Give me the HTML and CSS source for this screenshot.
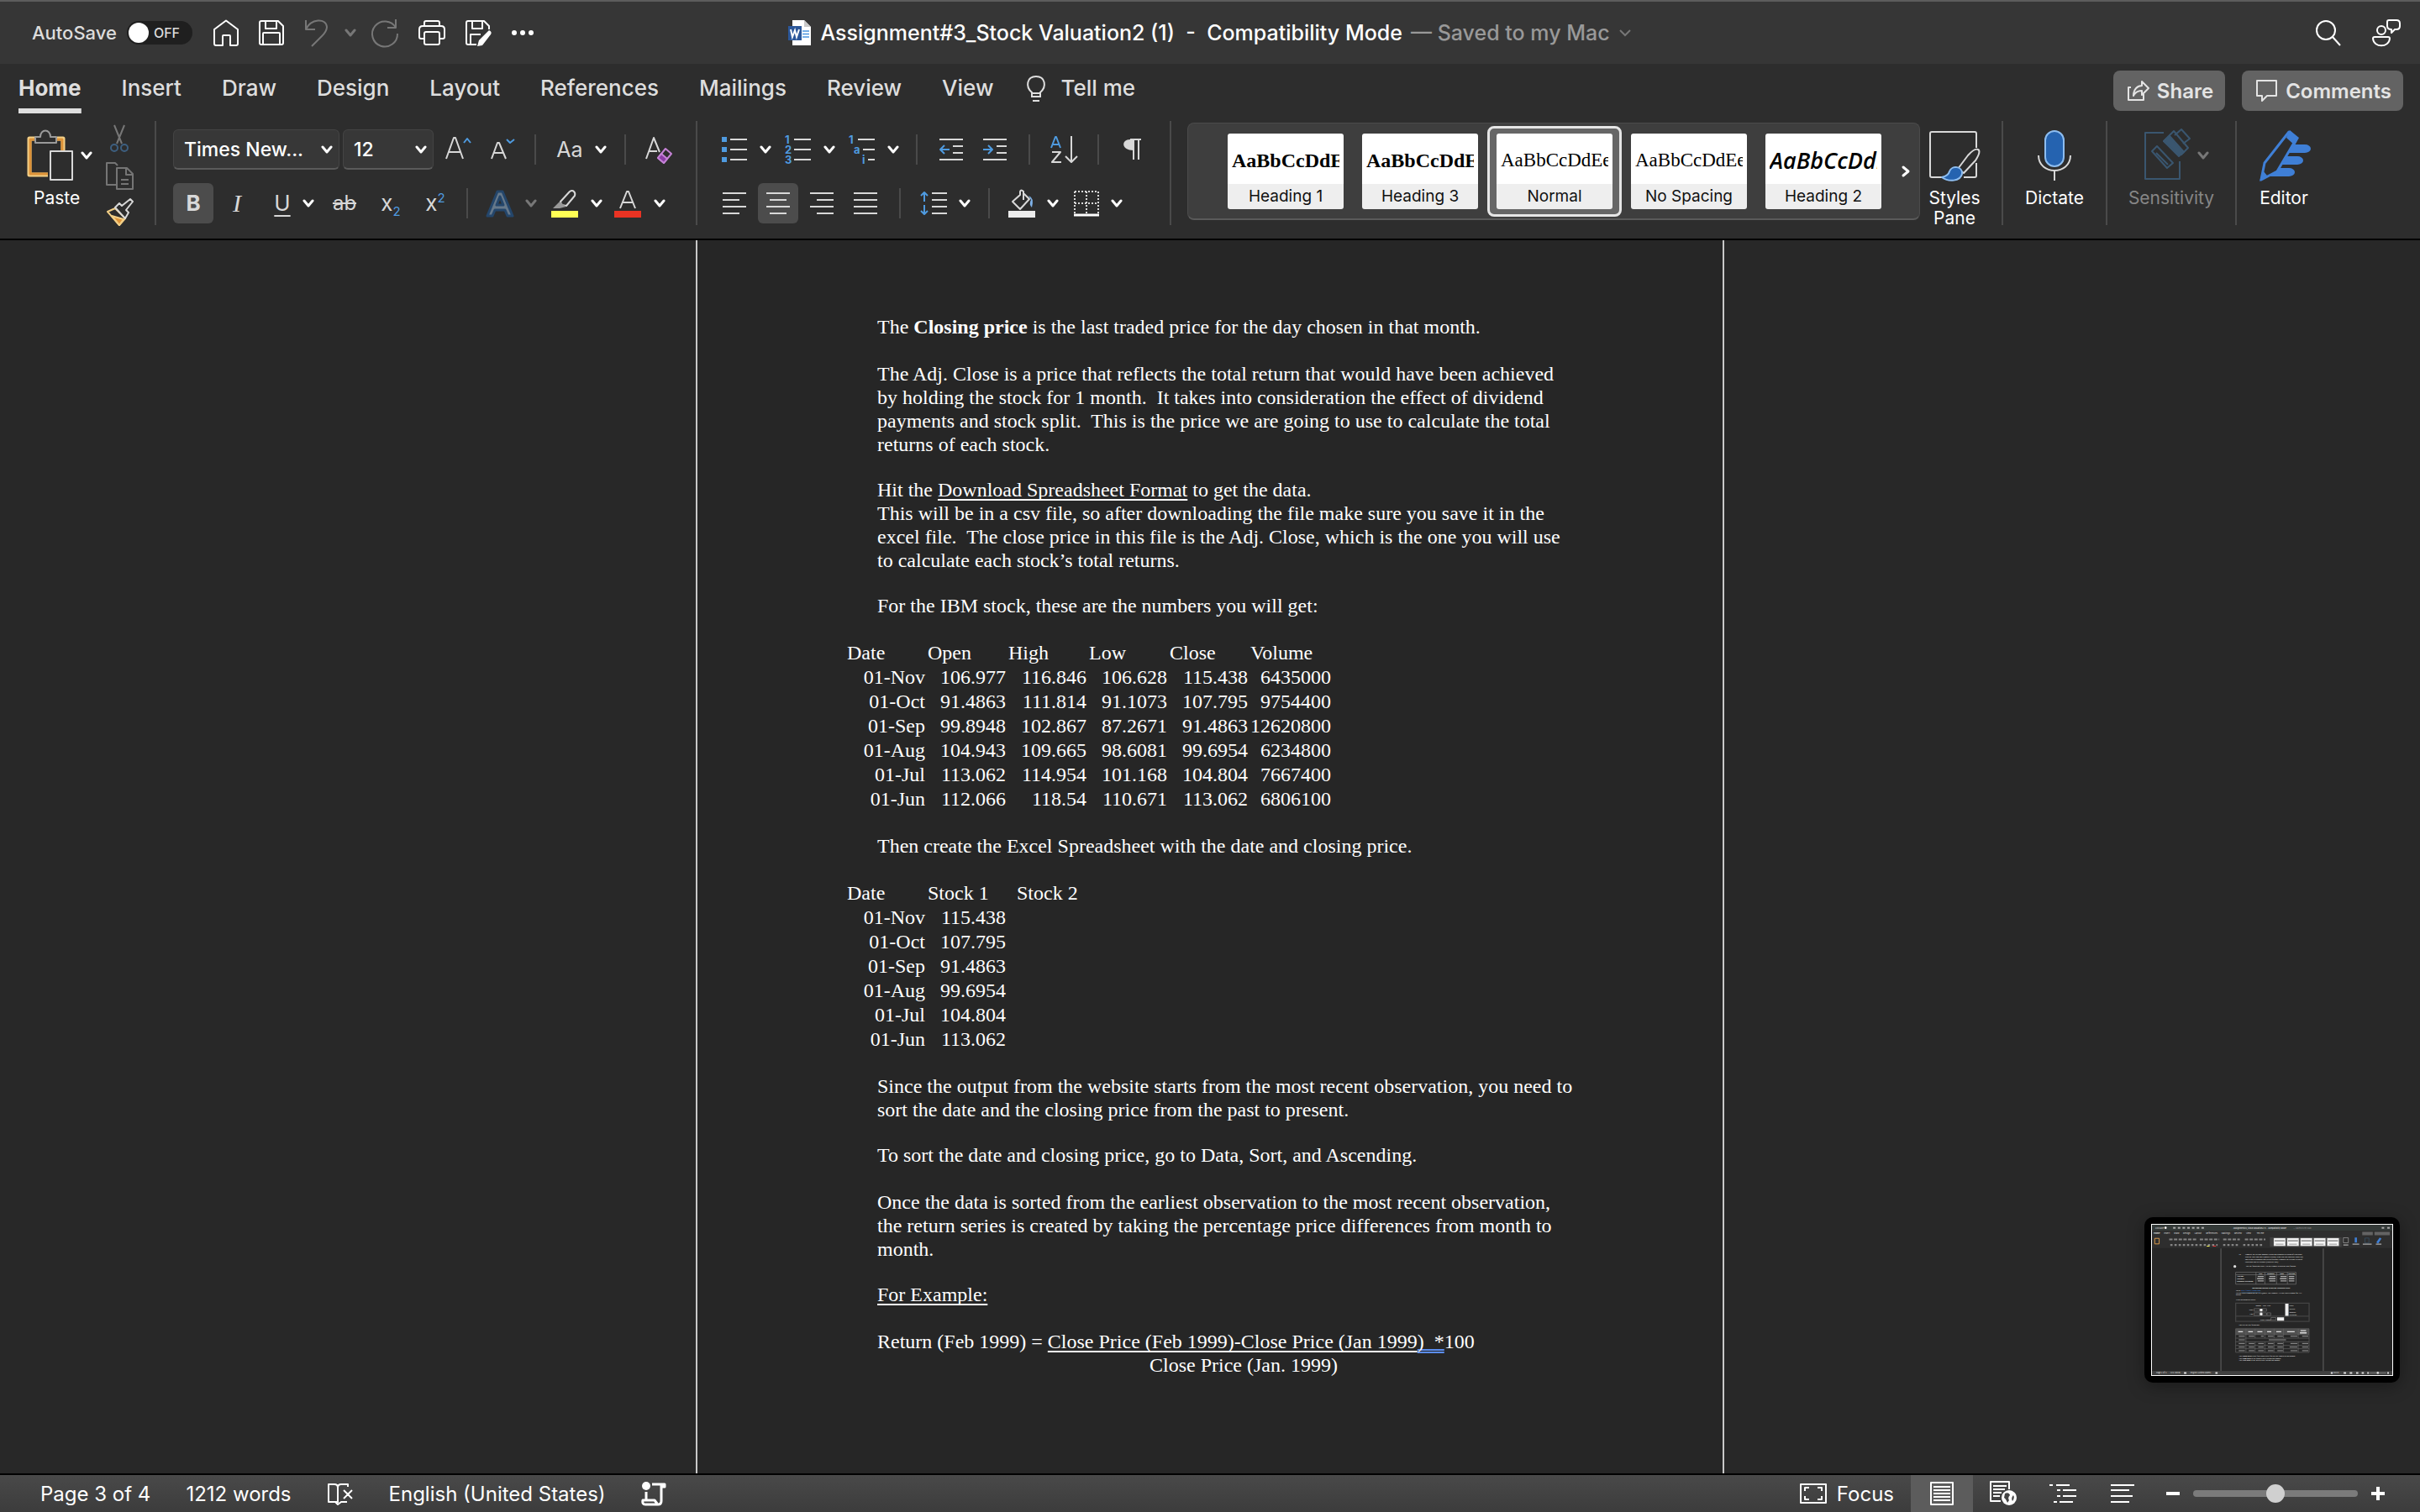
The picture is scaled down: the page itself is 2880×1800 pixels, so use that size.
FILE: index.html
```html
<!DOCTYPE html>
<html lang="en">
<head>
<meta charset="utf-8">
<title>Assignment#3_Stock Valuation2 (1)</title>
<link rel="stylesheet" href="styles.css">
</head>
<body>
<svg class="defs" aria-hidden="true">
  <symbol id="chev" viewBox="0 0 14 10"><path d="M2 2l5 6 5-6" fill="none" stroke="currentColor" stroke-width="3" stroke-linecap="round" stroke-linejoin="round"/></symbol>
</svg>

<header class="titlebar">
  <div class="quick">
    <label class="autosave">AutoSave <span class="toggle"><input type="checkbox"><i></i><b>OFF</b></span></label>
    <button aria-label="Home"><svg width="32" height="32" viewBox="0 0 32 32"><path d="M2 12L16 1.500l14 10.500v17q0 2-2 2h-7v-11q0-1-1-1h-7q-1 0-1 1v11H4q-2 0-2-2z"/></svg></button>
    <button aria-label="Save"><svg width="32" height="32" viewBox="0 0 32 32"><path d="M4 2h20l6 6v20q0 2-2 2H4q-2 0-2-2V4q0-2 2-2zM9 2v9h13V2M6 30V17q0-1 1-1h18q1 0 1 1v13"/></svg></button>
    <button class="dim" aria-label="Undo"><svg width="32" height="34" viewBox="0 0 32 34"><path d="M3 2v11h11M3 13C9 0 27-1 28 10c0 5-3 8-6 11L10 33"/></svg></button>
    <button class="dim mini" aria-label="Undo options"><svg width="14" height="10"><use href="#chev"/></svg></button>
    <button class="dim" aria-label="Redo"><svg width="34" height="34" viewBox="0 0 34 34"><path d="M30 1v10H20M30 11A15 15 0 1 0 32 18"/></svg></button>
    <button aria-label="Print"><svg width="34" height="32" viewBox="0 0 34 32"><path d="M8 8V4q0-2 2-2h14q2 0 2 2v4M8 23H4q-2 0-2-2V12q0-4 4-4h22q4 0 4 4v9q0 2-2 2h-4M8 17q0-2 2-2h14q2 0 2 2v11q0 2-2 2H10q-2 0-2-2z"/></svg></button>
    <button aria-label="Save as"><svg width="34" height="32" viewBox="0 0 34 32"><path d="M14 30H4q-2 0-2-2V4q0-2 2-2h19l6 6v4M9 2v9h12V2M7 30V18h12"/><path d="M29 13q4 2 2 5L21 31l-6 1 2-7z" fill="currentColor" stroke="none"/></svg></button>
    <button aria-label="More"><svg width="32" height="8" viewBox="0 0 32 8"><g fill="currentColor" stroke="none"><circle cx="3" cy="4" r="3"/><circle cx="13" cy="4" r="3"/><circle cx="23" cy="4" r="3"/></g></svg></button>
  </div>
  <h1 class="doc-title">
    <svg width="28" height="32" viewBox="0 0 28 32"><path d="M5 1h14l8 8v22H5z" fill="#fff"/><path d="M19 1v8h8z" fill="#c9c9c9"/><path d="M17 14h8M17 17.500h8M17 21h8" stroke="#4a94e0" stroke-width="1.500"/><path d="M0 8h16v17H0z" fill="#2b579a"/><path d="M3 12l2 9 3-8 2 8 3-9" fill="none" stroke="#fff" stroke-width="2"/></svg>
    <span>Assignment#3_Stock Valuation2 (1)&nbsp; -&nbsp; Compatibility Mode</span><span class="saved">— Saved to my Mac</span>
    <svg class="saved" width="16" height="10" viewBox="0 0 16 10"><path d="M2 2l6 6 6-6" fill="none" stroke="#777" stroke-width="2"/></svg>
  </h1>
  <div class="title-right">
    <button aria-label="Search"><svg width="32" height="32" viewBox="0 0 32 32"><circle cx="13" cy="13" r="11"/><path d="M21 21l9 10"/></svg></button>
    <button aria-label="Presence"><svg width="34" height="34" viewBox="0 0 34 34"><circle cx="11" cy="14" r="5"/><path d="M3 22h16q2 0 2 2c-1 11-19 11-20 0q0-2 2-2zM20 2h9q4 0 4 4v3q0 4-4 4h-2l-4 4v-4q-5 0-5-4V4q0-2 2-2z"/></svg></button>
  </div>
</header>

<nav class="tabs">
  <a class="on" href="#">Home</a><a href="#">Insert</a><a href="#">Draw</a><a href="#">Design</a><a href="#">Layout</a><a href="#">References</a><a href="#">Mailings</a><a href="#">Review</a><a href="#">View</a>
  <a class="tell" href="#"><svg width="26" height="34" viewBox="0 0 26 34"><path d="M8 26v-5C0 14 2 2 13 2s13 12 5 19v5zM8 22h10M9 31h8" fill="none" stroke="currentColor" stroke-width="2"/></svg>Tell me</a>
  <div class="tab-actions">
    <button><svg width="28" height="28" viewBox="0 0 28 28"><path d="M5 10H2v15h18v-7M8 20c0-8 5-12 10-12V3l8 8-8 8v-5c-5 0-8 2-10 6z"/></svg>Share</button>
    <button><svg width="28" height="28" viewBox="0 0 28 28"><path d="M2 2h23v18H14l-6 6v-6H2z"/></svg>Comments</button>
  </div>
</nav>

<section class="ribbon" aria-label="Home ribbon">
  <div class="group clip">
    <button class="big paste"><span class="split"><svg width="56" height="62" viewBox="0 0 56 62"><path d="M10 11H3v43h22M36 11h7v14" fill="none" stroke="#f3cf86" stroke-width="5"/><path d="M10 12H4v41h21M36 12h6v13" fill="none" stroke="#dd9339" stroke-width="3"/><path d="M10 16V9h6c0-10 12-10 12 0h7v7z" fill="#2d2d2d" stroke="#9a9a9a" stroke-width="2"/><path d="M28 26h26v34H28z" fill="#2d2d2d" stroke="#d8d8d8" stroke-width="2"/></svg><svg width="14" height="10"><use href="#chev"/></svg></span>Paste</button>
    <div class="clip-tools">
      <button aria-label="Cut"><svg width="34" height="34" viewBox="0 0 34 34"><path d="M10 1l9 22M22 1l-9 22" stroke="#777"/><circle cx="10" cy="28" r="4" stroke="#3d5f80"/><circle cx="22" cy="28" r="4" stroke="#3d5f80"/></svg></button>
      <button aria-label="Copy"><svg width="34" height="34" viewBox="0 0 34 34"><path d="M12 28H1V2h10l3 3M13 8h12l7 7v18H13zM24 8v8h8M18 22h9M18 27h9" stroke="#757575"/></svg></button>
      <button aria-label="Format painter"><svg width="34" height="34" viewBox="0 0 34 34"><path d="M2 16l9-4 12 12-7 8z" stroke="#f3cf86"/><path d="M7 21l14 4-5 7z" fill="#dd9339" stroke="#f3cf86"/><path d="M11 11l12 13 4-7-3-3 8-10-3-3-10 8-3-3z" fill="#2d2d2d" stroke="#d8d8d8"/></svg></button>
    </div>
  </div>

  <div class="group font-group">
    <div class="row font-1">
      <span class="picker"><select aria-label="Font"><option>Times New...</option></select><svg width="14" height="10"><use href="#chev"/></svg></span>
      <span class="picker"><select aria-label="Font size"><option>12</option></select><svg width="14" height="10"><use href="#chev"/></svg></span>
      <button aria-label="Grow font"><svg width="32" height="32" viewBox="0 0 32 32"><path d="M2 27L11 2h2l9 25M5 19h14"/><path d="M23 8l4-5 4 5" stroke="#4f9be0"/></svg></button>
      <button aria-label="Shrink font"><svg width="32" height="32" viewBox="0 0 32 32"><path d="M3 27l7-19h2l8 19M6 20h11"/><path d="M21 4l4 4 5-4" stroke="#4f9be0"/></svg></button>
      <hr>
      <button class="split"><span class="glyph">Aa</span><svg width="14" height="10"><use href="#chev"/></svg></button>
      <hr>
      <button aria-label="Clear formatting"><svg width="34" height="34" viewBox="0 0 34 34"><path d="M2 28L11 3l7 17M6 19h9"/><path d="M25 16l7 6-9 11-7-6z" stroke="#c583d6"/><path d="M20 22l7 6-4 5-7-6z" fill="#8c3da6" stroke="#c583d6"/></svg></button>
    </div>
    <div class="row font-2">
      <button class="on" aria-label="Bold"><b class="letter">B</b></button>
      <button aria-label="Italic"><i class="letter serif">I</i></button>
      <button class="split"><span class="letter under">U</span><svg width="14" height="10"><use href="#chev"/></svg></button>
      <button><s class="letter small">ab</s></button>
      <button><span class="letter">x<sub>2</sub></span></button>
      <button><span class="letter">x<sup>2</sup></span></button>
      <hr>
      <button class="split dim" aria-label="Text effects"><svg width="32" height="32" viewBox="0 0 32 32"><path d="M1 31L13 2h6l12 29h-6l-3-7H10l-3 7zM12 18h8L16 8z" fill="#66788a" stroke="#24466b" stroke-width="3"/></svg><svg width="14" height="10"><use href="#chev"/></svg></button>
      <button class="split" aria-label="Highlight"><svg width="34" height="34" viewBox="0 0 34 34"><path d="M12 15L23 3q3-2 5 0t1 5L19 20l-6-1z"/><path d="M11 15l8 6-8 2H3z" fill="#999" stroke="none"/><path d="M1 26h32v8H1z" fill="#ffff55" stroke="none"/></svg><svg width="14" height="10"><use href="#chev"/></svg></button>
      <button class="split" aria-label="Font colour"><svg width="34" height="34" viewBox="0 0 34 34"><path d="M8 23L16 3h2l8 20M11 16h12"/><path d="M1 26h32v8H1z" fill="#ea3323" stroke="none"/></svg><svg width="14" height="10"><use href="#chev"/></svg></button>
    </div>
  </div>

  <div class="group para-group">
    <div class="row para-1">
      <button class="split" aria-label="Bullets"><svg width="32" height="32" viewBox="0 0 32 32"><path d="M1 1h6v6H1zM1 13h6v6H1zM1 25h6v6H1z" fill="#4f9be0" stroke="none"/><path d="M11 4h20M11 16h20M11 28h20"/></svg><svg width="14" height="10"><use href="#chev"/></svg></button>
      <button class="split" aria-label="Numbering"><svg width="32" height="34" viewBox="0 0 32 34"><g class="num"><text x="0" y="10">1</text><text x="0" y="22">2</text><text x="0" y="34">3</text></g><path d="M11 5h20M11 17h20M11 29h20"/></svg><svg width="14" height="10"><use href="#chev"/></svg></button>
      <button class="split" aria-label="Multilevel list"><svg width="32" height="34" viewBox="0 0 32 34"><g class="num"><text x="0" y="10">1</text><text x="6" y="22">a</text><text x="16" y="34">i</text></g><path d="M11 5h20M17 17h14M23 29h8"/></svg><svg width="14" height="10"><use href="#chev"/></svg></button>
      <hr>
      <button aria-label="Decrease indent"><svg width="30" height="30" viewBox="0 0 30 30"><path d="M1 3h28M17 11h12M17 19h12M1 27h28"/><path d="M13 15H2M7 10l-5 5 5 5" stroke="#4f9be0"/></svg></button>
      <button aria-label="Increase indent"><svg width="30" height="30" viewBox="0 0 30 30"><path d="M1 3h28M17 11h12M17 19h12M1 27h28"/><path d="M1 15h11M7 10l5 5-5 5" stroke="#4f9be0"/></svg></button>
      <hr>
      <button aria-label="Sort"><svg width="34" height="34" viewBox="0 0 34 34"><path d="M2 15L7 2h1l5 13M4 11h8" stroke="#4f9be0"/><path d="M3 20h10L3 32h11M26 1v30M19 25l7 7 7-7"/></svg></button>
      <hr>
      <button aria-label="Show marks"><svg width="24" height="28" viewBox="0 0 24 28"><path d="M9 2h13M13 2v24M19 2v24"/><path d="M13 2v13C-2 15-2 2 9 2z" fill="currentColor" stroke="none"/></svg></button>
    </div>
    <div class="row para-2">
      <button aria-label="Align left"><svg width="28" height="28" viewBox="0 0 28 28"><path d="M0 2h28M0 10h20M0 18h28M0 26h20"/></svg></button>
      <button class="on" aria-label="Center"><svg width="28" height="28" viewBox="0 0 28 28"><path d="M0 2h28M4 10h20M0 18h28M4 26h20"/></svg></button>
      <button aria-label="Align right"><svg width="28" height="28" viewBox="0 0 28 28"><path d="M0 2h28M8 10h20M0 18h28M8 26h20"/></svg></button>
      <button aria-label="Justify"><svg width="28" height="28" viewBox="0 0 28 28"><path d="M0 2h28M0 10h28M0 18h28M0 26h28"/></svg></button>
      <hr>
      <button class="split" aria-label="Line spacing"><svg width="32" height="32" viewBox="0 0 32 32"><path d="M14 4h18M14 12h18M14 20h18M14 28h18"/><path d="M5 14V3M1 7l4-4 4 4M5 18v11M1 25l4 4 4-4" stroke="#4f9be0"/></svg><svg width="14" height="10"><use href="#chev"/></svg></button>
      <hr>
      <button class="split" aria-label="Shading"><svg width="32" height="34" viewBox="0 0 32 34"><path d="M14 7L5 15l9 9 11-12-7-7V3q-3-3-4 0zM18 5v8"/><path d="M24 8q7 2 4 14q-4-4-1-9z" fill="#7fb2e8" stroke="none"/><path d="M0 26h32v8H0z" fill="#ececec" stroke="none"/></svg><svg width="14" height="10"><use href="#chev"/></svg></button>
      <button class="split" aria-label="Borders"><svg width="30" height="32" viewBox="0 0 30 32"><path d="M1 2h28M1 16h28M1 2v28M15 2v26M29 2v28" stroke-dasharray="2 2"/><path d="M0 30h30" stroke="#fff" stroke-width="3"/></svg><svg width="14" height="10"><use href="#chev"/></svg></button>
    </div>
  </div>

  <div class="group styles-group">
    <div class="gallery">
      <button><b>AaBbCcDdEe</b><span>Heading 1</span></button>
      <button><b>AaBbCcDdEe</b><span>Heading 3</span></button>
      <button class="picked"><em>AaBbCcDdEe</em><span>Normal</span></button>
      <button><em>AaBbCcDdEe</em><span>No Spacing</span></button>
      <button><i>AaBbCcDdEe</i><span>Heading 2</span></button>
      <button class="more" aria-label="More styles"><svg width="10" height="14" viewBox="0 0 10 14"><path d="M2 2l6 5-6 5" fill="none" stroke="#fff" stroke-width="3" stroke-linecap="round"/></svg></button>
    </div>
    <button class="big"><svg width="62" height="62" viewBox="0 0 62 62"><path d="M16 57H4q-2 0-2-2V5q0-2 2-2h51q2 0 2 2v17M57 40v15q0 2-2 2H42" stroke="#d8d8d8"/><path d="M59 24q4 2-3 13L42 52l-7-5 12-16q8-9 12-7z" fill="#2d2d2d" stroke="#d8d8d8"/><path d="M16 57q8-2 9-7c3-8 16-6 15 3-2 9-16 10-24 4z" fill="#2563b0" stroke="#8dbdf0"/></svg>Styles<br>Pane</button>
  </div>

  <div class="group dictate"><button class="big"><svg width="42" height="62" viewBox="0 0 42 62"><rect x="10" y="2" width="22" height="42" rx="11" fill="#2563b0" stroke="#8dbdf0"/><path d="M2 31c0 24 38 24 38 0M21 50v11" stroke="#d8d8d8"/></svg>Dictate</button></div>
  <div class="group sensitivity"><button class="big"><span class="split"><svg width="56" height="62" viewBox="0 0 56 62"><g stroke="#3a566f"><path d="M24 4H2v55h41V38"/><path d="M10 26l6-6 19 20-7 6zM15 28l14 14" /><path d="M24 14l12-12 17 20-8 8-7-5z"/><path d="M24 14l7-6 17 19-6 5z" fill="#3a566f"/><path d="M37 7l8-7 10 11-8 6"/></g></svg><svg width="14" height="10"><use href="#chev"/></svg></span>Sensitivity</button></div>
  <div class="group editor"><button class="big"><svg width="62" height="62" viewBox="0 0 62 62"><path d="M38 18h18a7 5 0 0 1 0 10H34zM33 32h14a7 5 0 0 1 0 10H26zM24 46h13a7 5 0 0 1 0 10H14z" fill="#3f7fd6" stroke="none"/><path d="M37 3l9 8-23 39-19 10 4-20z" fill="#2d2d2d" stroke="#3f7fd6" stroke-width="3"/><path d="M38 1l11 9-5 9-10-9zM2 62l4-13 5 6z" fill="#3f7fd6" stroke="none"/></svg>Editor</button></div>
</section>

<main class="workspace">
  <article class="page">
    <p>The <b>Closing price</b> is the last traded price for the day chosen in that month.</p>
    <p class="long">The Adj. Close is a price that reflects the total return that would have been achieved by holding the stock for 1 month.&nbsp; It takes into consideration the effect of dividend payments and stock split.&nbsp; This is the price we are going to use to calculate the total returns of each stock.</p>
    <p class="long">Hit the <u>Download Spreadsheet Format</u> to get the data.<br>This will be in a csv file, so after downloading the file make sure you save it in the excel file.&nbsp; The close price in this file is the Adj. Close, which is the one you will use to calculate each stock’s total returns.</p>
    <p>For the IBM stock, these are the numbers you will get:</p>
    <table>
      <tr><th>Date</th><th>Open</th><th>High</th><th>Low</th><th>Close</th><th>Volume</th></tr>
      <tr><td>01-Nov</td><td>106.977</td><td>116.846</td><td>106.628</td><td>115.438</td><td>6435000</td></tr>
      <tr><td>01-Oct</td><td>91.4863</td><td>111.814</td><td>91.1073</td><td>107.795</td><td>9754400</td></tr>
      <tr><td>01-Sep</td><td>99.8948</td><td>102.867</td><td>87.2671</td><td>91.4863</td><td>12620800</td></tr>
      <tr><td>01-Aug</td><td>104.943</td><td>109.665</td><td>98.6081</td><td>99.6954</td><td>6234800</td></tr>
      <tr><td>01-Jul</td><td>113.062</td><td>114.954</td><td>101.168</td><td>104.804</td><td>7667400</td></tr>
      <tr><td>01-Jun</td><td>112.066</td><td>118.54</td><td>110.671</td><td>113.062</td><td>6806100</td></tr>
    </table>
    <p>Then create the Excel Spreadsheet with the date and closing price.</p>
    <table class="stocks">
      <tr><th>Date</th><th>Stock 1</th><th>Stock 2</th></tr>
      <tr><td>01-Nov</td><td>115.438</td><td></td></tr>
      <tr><td>01-Oct</td><td>107.795</td><td></td></tr>
      <tr><td>01-Sep</td><td>91.4863</td><td></td></tr>
      <tr><td>01-Aug</td><td>99.6954</td><td></td></tr>
      <tr><td>01-Jul</td><td>104.804</td><td></td></tr>
      <tr><td>01-Jun</td><td>113.062</td><td></td></tr>
    </table>
    <p class="long">Since the output from the website starts from the most recent observation, you need to sort the date and the closing price from the past to present.</p>
    <p>To sort the date and closing price, go to Data, Sort, and Ascending.</p>
    <p class="long">Once the data is sorted from the earliest observation to the most recent observation, the return series is created by taking the percentage price differences from month to month.</p>
    <p><u>For Example:</u></p>
    <p class="formula">Return (Feb 1999) = <u>Close Price (Feb 1999)-Close Price (Jan 1999</u><span class="flag">)&nbsp; *</span>100<span class="divisor">Close Price (Jan. 1999)</span></p>
  </article>

  <aside class="preview" aria-label="Captured window">
    <svg viewBox="90 84 864 540">
      <rect x="90" y="84" width="864" height="540" fill="#262626"/>
      <rect x="90" y="84" width="864" height="22" fill="#343a38"/><rect x="90" y="106" width="864" height="62" fill="#2e2e2e"/>
      <g fill="#ddd" font-size="8"><text x="101" y="98" font-size="7">AutoSave</text><text x="382" y="98" font-size="7" font-weight="600">Assignment#3_Stock Valuation2 (1) - Compatibility Mode</text><text x="598" y="98" font-size="7" fill="#999">— Saved to my Mac</text>
      <text x="96" y="118" font-weight="700">Home</text><text x="133" y="118">Insert</text><text x="169" y="118">Draw</text><text x="202" y="118">Design</text><text x="243" y="118">Layout</text><text x="284" y="118">References</text><text x="340" y="118">Mailings</text><text x="386" y="118">Review</text><text x="428" y="118">View</text><text x="466" y="118">Tell me</text></g>
      <circle cx="139" cy="95" r="4" fill="#fff"/><path d="M166 95h116M916 95h10M936 95h10" stroke="#aaa" stroke-width="6" stroke-dasharray="9 8"/>
      <path d="M846 110h38v12h-38zM890 110h55v12h-55z" fill="#636363"/>
      <path d="M152 137h100M262 137h70M346 137h60M424 137h74" stroke="#858585" stroke-width="6" stroke-dasharray="12 5"/>
      <path d="M156 157h170M346 157h60M418 157h74" stroke="#858585" stroke-width="7" stroke-dasharray="8 7"/>
      <path d="M100 133h16v20h-16z" fill="none" stroke="#d99a4c" stroke-width="3"/><path d="M287 161h10" stroke="#ff5" stroke-width="3"/><path d="M309 161h11" stroke="#e33" stroke-width="3"/>
      <path d="M514 129h258v34H514z" fill="#404040"/>
      <path d="M528 132h42v28h-42zM576 132h42v28h-42zM624 132h42v28h-42zM672 132h42v28h-42zM720 132h42v28h-42z" fill="#f4f4f4" stroke="#999"/>
      <path d="M531 142h36M579 142h36M627 142h36M675 142h36M723 142h36" stroke="#777" stroke-width="4"/><path d="M535 154h28M583 154h28M631 154h28M679 154h28M727 154h28" stroke="#999" stroke-width="3"/>
      <path d="M778 131h18v18h-18z" fill="none" stroke="#aaa" stroke-width="2"/><path d="M823 130v18M900 150l12-18" stroke="#3f7fd6" stroke-width="8"/><path d="M856 132h14v18h-14z" fill="none" stroke="#3a566f" stroke-width="2"/>
      <path d="M778 157h18M811 154h24M848 154h32M895 154h20" stroke="#aaa" stroke-width="4"/>
      <path d="M338 169v441M706 169v441" stroke="#555" stroke-width="4"/>
      <g class="mini-doc"><text x="402" y="194">10.</text><text x="425" y="194">Compute the average monthly return and standard deviation of each stock</text><text x="425" y="203">with the S&amp;P 500 index (market return). What can you conclude about risk</text><text x="425" y="211">and return relationship and diversification? Compare the average return of</text><text x="425" y="219">each stock and its variance (volatility risk).</text><text x="428" y="236">Use the following Table 1 as an example to present your finding.</text></g>
      <circle cx="388" cy="234" r="5" fill="#ddd"/>
      <path d="M391 255h217v43H391zM391 264h217M464 255v43M496 255v43M538 255v43M577 255v43" fill="none" stroke="#777" stroke-width="2"/>
      <g class="mini-doc" font-weight="700"><text x="395" y="272">Average</text><text x="395" y="280">Variance</text><text x="395" y="288">Standard Deviation</text><text x="473" y="262">ATT</text><text x="504" y="262">Walmart</text><text x="550" y="262">IBM</text><text x="580" y="262">S&amp;P500</text><text x="450" y="314">Instructions on how to get the Historical Price</text></g>
      <path d="M470 270h22M512 270h22M552 270h22M582 270h20M468 278h24M510 278h24M550 278h24M582 278h20M470 286h22M512 286h22M552 286h22M582 286h20" stroke="#aaa" stroke-width="4"/>
      <g class="mini-doc"><text x="392" y="323">Go to</text><text x="411" y="323" class="mini-link">http://finance.yahoo.com</text><text x="392" y="331">Put the ticker symbol on the Get Quotes. For example: T is the ticker symbol for ATT</text><text x="392" y="339">stocks.</text><text x="392" y="355">Click on historical prices.</text><text x="463" y="377">Month</text><text x="489" y="377">Day</text><text x="503" y="377">Year</text><text x="440" y="393">Start</text><text x="442" y="408">End</text><text x="584" y="378">Daily</text><text x="584" y="389">Weekly</text><text x="584" y="400">Monthly</text><text x="584" y="411">Dividend</text><text x="478" y="428">Ticker Symbol</text><text x="402" y="447">You will get the following:</text></g>
      <path d="M391 366h264v66H391zM391 413h264" fill="none" stroke="#444" stroke-width="4"/>
      <path d="M457 386h20v9h-20zM488 386h14v9h-14zM457 401h20v9h-20zM488 401h14v9h-14zM504 401h13v9h-13zM518 418h18v9h-18z" fill="none" stroke="#777" stroke-width="2"/><path d="M478 386h9v10h-9zM478 400h9v10h-9zM569 368h12v44h-12zM540 417h25v12h-25z" fill="#eee"/>
      <path d="M391 458h264v21H391z" fill="#505050"/><path d="M391 458h264v85H391zM391 479h264M391 492h264M391 505h264M391 518h264M391 530h264M428 458v85M461 458v34M496 458v34M529 458v34M563 458v34M616 458v34M461 505v38M496 505v38M529 505v38M563 505v38M616 505v38" fill="none" stroke="#666" stroke-width="2"/>
      <path d="M400 469h17M436 469h17M469 469h18M504 469h15M537 469h18M576 469h27M624 465h20M622 473h24" stroke="#ddd" stroke-width="4"/>
      <path d="M402 485h22M402 498h22M402 511h22M402 524h22M402 537h22M438 485h20M438 511h20M438 524h20M438 537h20M482 485h10M472 511h20M472 524h20M472 537h20M507 485h20M507 511h20M507 524h20M507 537h20M541 485h20M541 511h20M541 524h20M541 537h20M588 485h25M588 511h25M585 524h28M588 537h25M630 485h22M630 511h22M630 524h22M630 537h22M510 498h62" stroke="#999" stroke-width="3"/>
      <g class="mini-doc"><text x="403" y="558">The <tspan font-weight="700">Open price</tspan> is the first traded price for the day chosen in that month.</text><text x="403" y="566">The <tspan font-weight="700">High price</tspan> is the highest price during that month.</text><text x="403" y="574">The <tspan font-weight="700">Low price</tspan> is the lowest price during that month.</text></g>
      <rect x="90" y="610" width="864" height="14" fill="#414141"/><g fill="#ddd" font-size="7"><text x="105" y="620">Page 2 of 4</text><text x="156" y="620">1212 words</text><text x="228" y="620">English (United States)</text><text x="742" y="620">Focus</text></g><path d="M205 617h9M318 617h8M733 617h7M779 617h9M801 617h9M824 617h8M844 617h8M864 617h6M936 617h6" stroke="#ddd" stroke-width="6"/><path d="M873 617h59" stroke="#999" stroke-width="2"/><circle cx="902" cy="617" r="4" fill="#ddd"/>
    </svg>
  </aside>
</main>

<footer class="status">
  <button>Page 3 of 4</button>
  <button>1212 words</button>
  <button aria-label="Proofing"><svg width="32" height="30" viewBox="0 0 32 30"><path d="M12 25H2V4h7q4 0 4 4 0-4 4-4h8v3M13 8v18M24 25h-7l-4 3-3-3M20 11l10 10M30 11L20 21"/></svg></button>
  <button>English (United States)</button>
  <button aria-label="Macros"><svg width="32" height="30" viewBox="0 0 32 30"><circle cx="6" cy="6" r="5" fill="currentColor" stroke="none"/><path d="M13 4h15v3h-4v17q0 4-4 4H5q-4 0-3-5h14l3 4M24 4v20M6 13v10" stroke-width="3"/></svg></button>
  <div class="views">
    <button class="focus"><svg width="32" height="26" viewBox="0 0 32 26"><path d="M1 2h30v22H1zM6 10V6h5M21 6h5v4M26 16v4h-5M11 20H6v-4"/></svg>Focus</button>
    <button class="on" aria-label="Print layout"><svg width="30" height="28" viewBox="0 0 30 28"><path d="M2 1h26v26H2zM5 6h20M5 10h20M5 14h20M5 18h20M5 22h20"/></svg></button>
    <button aria-label="Web layout"><svg width="34" height="30" viewBox="0 0 34 30"><path d="M14 24H2V1h22v9M5 6h16M5 10h14M5 14h10M5 18h8"/><circle cx="24" cy="20" r="9" fill="#fff" stroke="none"/><path d="M19 15q5-2 6 2-3 3-1 6l-2 3q-2-5-4-6zM29 17q2 3-1 7-2-4 1-7" fill="#444" stroke="none"/></svg></button>
    <button aria-label="Outline"><svg width="32" height="26" viewBox="0 0 32 26"><path d="M0 3h4M8 3h16M9 9h4M16 9h16M9 16h4M16 16h16M5 23h4M12 23h16"/></svg></button>
    <button aria-label="Draft"><svg width="30" height="26" viewBox="0 0 30 26"><path d="M1 3h28M1 9h22M1 16h26M1 23h22"/></svg></button>
  </div>
  <div class="zoom">
    <button aria-label="Zoom out"><svg width="16" height="16" viewBox="0 0 16 16"><path d="M0 8h16" stroke-width="4"/></svg></button>
    <input type="range" aria-label="Zoom" min="0" max="100" value="50">
    <button aria-label="Zoom in"><svg width="16" height="16" viewBox="0 0 16 16"><path d="M0 8h16M8 0v16" stroke-width="4"/></svg></button>
  </div>
</footer>
</body>
</html>
```
FILE: styles.css
```css
* { box-sizing: border-box; }
body {
  margin: 0;
  min-height: 100vh;
  display: flex;
  flex-direction: column;
  background: #282828;
  color: #fff;
  font-family: Inter, "Liberation Sans", sans-serif;
}
.defs { position: absolute; width: 0; height: 0; }
button {
  border: 0;
  padding: 0;
  background: none;
  color: inherit;
  font: inherit;
  display: flex;
  align-items: center;
  justify-content: center;
}
svg { display: block; flex: none; }
button > svg, .split > svg { fill: none; stroke: currentColor; stroke-width: 2; stroke-linejoin: round; overflow: visible; }

/* Title bar */
.titlebar {
  height: 76px;
  display: grid;
  grid-template-columns: 1fr auto 1fr;
  align-items: center;
  background: #363636;
  border-top: 2px solid #5c5c5c;
}
.quick { display: flex; align-items: center; padding-left: 38px; gap: 22px; }
.autosave { display: flex; align-items: center; gap: 12px; margin-right: 2px; font-size: 22px; font-weight: 500; color: #dcdcdc; }
.toggle {
  display: flex;
  align-items: center;
  width: 78px;
  height: 28px;
  gap: 6px;
  border-radius: 14px;
  background: #1f1f1f;
}
.toggle input { position: absolute; opacity: 0; }
.toggle i { width: 24px; height: 24px; margin-left: 2px; border-radius: 50%; background: #fff; }
.toggle b { font-size: 16px; font-weight: 500; }
.dim { color: #777; }
.mini { margin: 0 -5px; }
.doc-title { display: flex; align-items: center; gap: 10px; margin: 0; font-size: 25px; font-weight: 500; white-space: pre; }
.saved { color: #999; }
.title-right { display: flex; justify-content: flex-end; gap: 36px; padding-right: 23px; }

/* Tabs */
.tabs { display: flex; align-items: center; gap: 48px; height: 68px; padding: 0 20px 0 22px; background: #2d2d2d; }
.tabs a {
  height: 50px;
  padding-top: 4px;
  line-height: 32px;
  color: #dedede;
  font-size: 26px;
  font-weight: 500;
  text-decoration: none;
}
.tabs .on { font-weight: 700; background: linear-gradient(#dedede, #dedede) bottom / 100% 6px no-repeat; }
.tabs .tell { display: flex; gap: 16px; margin-left: -10px; }
.tab-actions { display: flex; gap: 20px; margin-left: auto; padding-bottom: 4px; }
.tab-actions button {
  height: 48px;
  padding: 0 14px 0 16px;
  gap: 8px;
  border-radius: 8px;
  background: #636363;
  color: #e4e4e4;
  font-size: 24px;
  font-weight: 600;
}

/* Ribbon */
.ribbon { display: flex; height: 142px; background: #2d2d2d; border-bottom: 2px solid #000; color: #d8d8d8; }
.group { height: 124px; padding-top: 10px; border-right: 2px solid #4a4a4a; }
.group:last-child { border-right: 0; }
.big { flex-direction: column; justify-content: flex-start; color: #fff; font-size: 21px; line-height: 24px; }
.big > svg, .big > .split { margin-bottom: 8px; }
.split { display: flex; align-items: center; gap: 14px; }
.split svg:last-child { color: #fff; }
.split.dim svg:last-child { color: #777; }
.clip { display: flex; gap: 16px; width: 186px; padding-left: 32px; }
.paste > .split { gap: 8px; }
.paste { align-items: flex-start; width: 78px; text-indent: 8px; }
.clip-tools { display: flex; flex-direction: column; gap: 10px; margin-top: -6px; }
.row { display: grid; height: 48px; justify-items: center; align-items: center; margin-bottom: 16px; }
.row hr { width: 2px; height: 36px; margin: 0; border: 0; background: #4a4a4a; }
.row .on { width: 48px; height: 48px; border-radius: 6px; background: #4c4c4c; }
.font-group { width: 644px; padding-left: 20px; }
.font-1 { grid-template-columns: 202px 108px 58px 48px 30px 80px 24px 56px; }
.font-2 { grid-template-columns: 48px 56px 80px 40px 70px 36px 40px 66px 88px 62px; }
.para-group { width: 564px; padding-left: 20px; }
.para-1 { grid-template-columns: 76px 76px 76px 26px 56px 48px 34px 48px 34px 48px; }
.para-2 { grid-template-columns: 48px 56px 48px 56px 26px 82px 22px 84px 70px; }
.picker { display: grid; align-items: center; justify-self: start; width: 198px; }
.picker + .picker { width: 108px; }
.picker > * { grid-area: 1 / 1; }
.picker svg { justify-self: end; margin-right: 8px; color: #fff; }
select {
  appearance: none;
  width: 100%;
  height: 48px;
  padding: 0 12px;
  border: 1px solid #444;
  border-bottom: 2px solid #5a5a5a;
  border-radius: 6px;
  background: #373737;
  color: #fff;
  font: 500 23px Inter, sans-serif;
}
.glyph { font-size: 25px; }
.letter { font-size: 26px; line-height: 32px; font-weight: 400; }
b.letter { font-weight: 700; }
.serif { font-family: "Liberation Serif", serif; font-size: 30px; }
.under { text-decoration: underline; text-underline-offset: 5px; }
.small { font-size: 24px; }
.letter sub, .letter sup { color: #4f9be0; font-size: 15px; line-height: 0; }
.num { fill: #4f9be0; stroke: none; font-size: 13px; font-weight: 700; }

/* Style gallery */
.styles-group { display: flex; gap: 10px; width: 990px; padding-left: 19px; }
.gallery {
  display: flex;
  width: 872px;
  height: 116px;
  margin-top: -8px;
  padding-left: 36px;
  border: 1px solid #4b4b4b;
  border-bottom: 2px solid #5a5a5a;
  border-radius: 8px;
  background: #3e3e3e;
}
.gallery button {
  width: 160px;
  height: 108px;
  margin-top: 3px;
  padding: 6px 8px;
  border: 3px solid transparent;
  border-radius: 8px;
  flex-direction: column;
}
.gallery .picked { border-color: #e6e6e6; background: #666; }
.gallery b, .gallery em, .gallery i {
  width: 138px;
  height: 61px;
  padding-top: 18px;
  border: solid #fff;
  border-width: 0 5px;
  border-radius: 3px 3px 0 0;
  overflow: hidden;
  background: #fff;
  color: #000;
  font: 23px/28px "Liberation Serif", serif;
  text-align: left;
}
.gallery b { font-size: 24px; font-weight: 700; }
.gallery i { font: italic 600 27px/28px "Open Sans", sans-serif; }
.gallery span {
  width: 138px;
  height: 30px;
  border-radius: 0 0 3px 3px;
  background: #eee;
  color: #111;
  font-size: 19px;
  line-height: 30px;
}
.gallery .more { width: 20px; margin-left: 8px; padding: 0; border: 0; }
.dictate { width: 124px; }
.sensitivity { width: 154px; }
.dictate, .sensitivity, .editor { display: flex; justify-content: center; }
.editor { padding-left: 25px; }
.sensitivity .big { color: #868686; }
.sensitivity .split { gap: 8px; padding-left: 12px; }
.sensitivity .split svg:last-child { color: #777; }

/* Document */
.workspace { position: relative; flex: 1; display: flex; justify-content: center; }
.page {
  width: 1224px;
  padding: 89px 0 0 214px;
  border: solid #c8c8c8;
  border-width: 0 2px;
  background: #262626;
  font: 24px/28px "Liberation Serif", serif;
}
.page p { width: 830px; margin: 0 0 28px; }
.page .long { margin-bottom: 26px; }
.page u { text-decoration-thickness: 2px; text-underline-offset: 3px; text-decoration-skip-ink: none; }
.page table { table-layout: fixed; width: 576px; margin: 0 0 27px -36px; border-collapse: collapse; }
.page .stocks { width: 288px; }
.page th, .page td { width: 96px; height: 29px; padding: 0; font-weight: 400; line-height: 28px; vertical-align: top; }
.page th { text-align: left; }
.page td { padding-right: 3px; text-align: right; }
.page td:nth-child(6) { padding-right: 0; }
.page .stocks th:last-child { padding-left: 10px; }
.flag { text-decoration: underline double #5b8df0 2px; text-underline-offset: 1px; text-decoration-skip-ink: none; }
.divisor { display: block; padding-left: 324px; }

/* Floating capture preview */
.preview {
  position: absolute;
  right: 24px;
  bottom: 108px;
  width: 304px;
  padding: 8px;
  border-radius: 10px;
  background: #000;
  box-shadow: 0 4px 20px rgba(0, 0, 0, .35);
}
.preview svg { width: 100%; border: 1px solid #fff; }
.mini-doc { fill: #fff; font-family: "Liberation Serif", serif; font-size: 7px; }
.mini-link { fill: #3a8ee6; text-decoration: underline; }

/* Status bar */
.status {
  display: flex;
  align-items: center;
  height: 46px;
  padding: 0 42px 0 48px;
  gap: 42px;
  border-top: 2px solid #000;
  background: linear-gradient(#494949, #3c3c3c);
  font-size: 24px;
}
.views { display: flex; align-self: stretch; align-items: center; margin-left: auto; }
.views button { width: 71px; height: 100%; }
.views .focus { width: auto; gap: 12px; padding-right: 20px; }
.views .on { width: 74px; background: #5c5c5c; }
.zoom { display: flex; align-items: center; gap: 16px; margin-left: -25px; }
.zoom input { appearance: none; width: 196px; height: 8px; margin: 0; border-radius: 4px; background: #7b7b7b; }
.zoom input::-webkit-slider-thumb { appearance: none; width: 22px; height: 22px; border-radius: 50%; background: #d0d0d0; }
```
